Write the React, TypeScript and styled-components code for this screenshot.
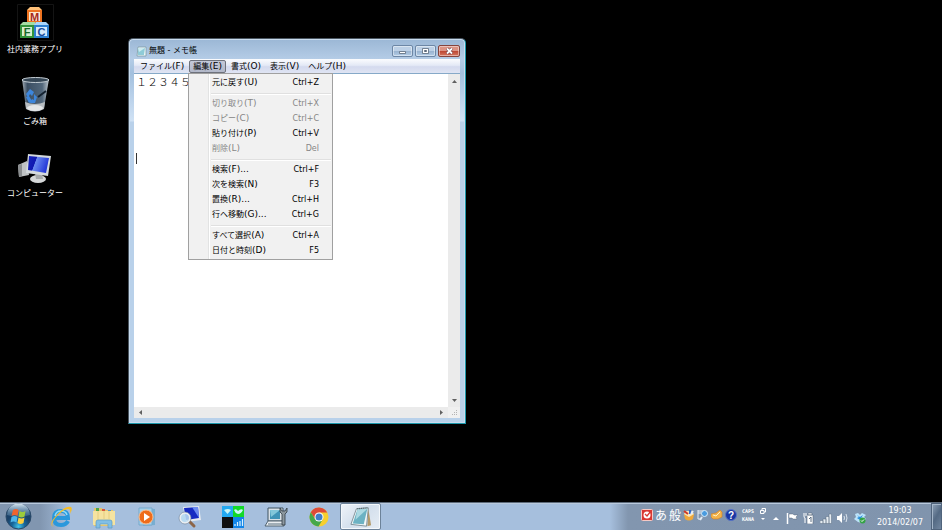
import React from 'react';
import styled, { createGlobalStyle, css } from 'styled-components';

const GlobalStyle = createGlobalStyle`
  * { box-sizing: border-box; }
  html, body, #root { height: 100%; }
  body {
    margin: 0;
    background: #000;
    color: #000;
    overflow: hidden;
    font: 8px/15px "DejaVu Sans", "Noto Sans CJK JP", sans-serif;
  }
  button, textarea { font: inherit; color: inherit; margin: 0; padding: 0; border: 0; background: none; }
  svg { display: block; }
`;

const Screen = styled.div`
  display: flex;
  flex-direction: column;
  min-height: 100vh;
`;

const Desktop = styled.main`
  position: relative;
  flex: 1;
`;

const IconColumn = styled.nav`
  display: flex;
  flex-direction: column;
  gap: 15px;
  width: 70px;
  padding-top: 4px;
`;

const Shortcut = styled.button`
  display: flex;
  flex-direction: column;
  align-items: center;
  height: 57px;
  color: #fff;
  white-space: nowrap;
  line-height: 12px;
  gap: 3px;
`;

const Window = styled.section`
  position: absolute;
  left: 128px;
  top: 38px;
  display: flex;
  flex-direction: column;
  width: 338px;
  height: 386px;
  padding: 1px 5px 5px;
  border: 1px solid #4a5661;
  border-right-color: #1c98ac;
  border-bottom-color: #1c98ac;
  border-radius: 5px 5px 0 0;
  background: linear-gradient(#9bb7d5, #b4cce6 20px, #a3c0de 34px, #d0e2f5 82px, #b9d1ea 83px);
  box-shadow: inset 0 0 0 1px #c9dcef;
`;

const TitleBar = styled.header`
  display: flex;
  align-items: center;
  gap: 2px;
  height: 19px;
  padding: 3px 0 0 2px;
`;

const Title = styled.h1`
  flex: 1;
  margin: 0;
  font-size: 8px;
  font-weight: 400;
  line-height: 12px;
`;

const Caption = styled.div`
  display: flex;
  gap: 2px;
`;

const CaptionButton = styled.button<{ $close?: boolean }>`
  display: grid;
  place-items: center;
  width: 21px;
  height: 12px;
  border: 1px solid #6d87a6;
  border-radius: 2px;
  box-shadow: inset 0 0 0 1px #ffffff70;
  background: linear-gradient(#bcd0e6 50%, #98b2cf 50%, #b2cce6);
  ${p => p.$close && css`
    width: 22px;
    border-color: #85443d;
    background: linear-gradient(#dc9384 50%, #bd4430 50%, #d47860);
  `}
`;

const MenuBar = styled.nav`
  display: flex;
  align-items: center;
  gap: 1px;
  height: 14px;
  padding-left: 2px;
  background: linear-gradient(#fbfcfe, #e4e9f6 45%, #d4daee 55%, #dfe4f3);
`;

const MenuName = styled.button<{ $open?: boolean }>`
  height: 13px;
  padding: 0 3px;
  border: 1px solid transparent;
  border-radius: 2px;
  line-height: 10px;
  white-space: nowrap;
  ${p => p.$open && css`
    border-color: #6e727c;
    background: linear-gradient(#c4c9d8, #b2b8c9);
  `}
`;

const Latin = styled.span`
  font-size: 9px;
`;

const Editor = styled.div`
  display: grid;
  grid-template: 1fr 11px / 1fr 12px;
  flex: 1;
  border-top: 1px solid #86a9c8;
  background: #f0f0f0;
`;

const TextBox = styled.textarea`
  resize: none;
  outline: none;
  overflow: hidden;
  padding: 2px;
  background: #fff;
  font: 11px/11px "Noto Sans CJK JP", sans-serif;
  font-weight: 300;
`;

const ScrollBar = styled.div<{ $vertical?: boolean }>`
  display: flex;
  flex-direction: ${p => (p.$vertical ? 'column' : 'row')};
  align-items: center;
  justify-content: space-between;
  padding: ${p => (p.$vertical ? '5px 0 4px' : '0 4px')};
  background: #ebebeb;
`;

const Caret = styled.i`
  position: absolute;
  left: 7px;
  top: 114px;
  width: 1px;
  height: 11px;
  background: #333;
`;

const Menu = styled.ul`
  position: absolute;
  left: 59px;
  top: 34px;
  width: 145px;
  margin: 0;
  padding: 1px;
  list-style: none;
  border: 1px solid #a0a0a0;
  background: linear-gradient(90deg, #f1f1f1 19px, #e2e3e3 19px, #e2e3e3 20px, #fff 20px, #fff 21px, #f1f1f1 21px);
`;

const MenuRow = styled.li<{ $divided?: boolean }>`
  ${p => p.$divided && css`
    margin-top: 3px;
    padding-top: 3px;
    background: linear-gradient(#e0e0e0 1px, #fff 1px, #fff 2px, transparent 2px) 21px 0 no-repeat;
  `}
`;

const MenuItem = styled.button`
  display: flex;
  justify-content: space-between;
  width: 100%;
  height: 15px;
  padding: 0 12px 0 22px;
  line-height: 15px;
  white-space: nowrap;
  &:disabled { color: #868686; }
`;

const Taskbar = styled.footer`
  display: flex;
  align-items: stretch;
  height: 28px;
  border-top: 1px solid #5c6a7a;
  box-shadow: inset 0 1px 0 #b9c9dc;
  background: linear-gradient(90deg, #8196b0, #8196b0 40px, #a6bfdd 70px, #a6bfdd calc(100% - 332px), #8296af calc(100% - 314px), #8094ad);
`;

const TaskButton = styled.button<{ $active?: boolean }>`
  display: grid;
  place-items: center;
  width: 43px;
  ${p => p.$active && css`
    width: 41px;
    border: 1px solid #6c8299;
    border-radius: 2px;
    box-shadow: inset 0 0 0 1px #f4f8fc;
    background: linear-gradient(135deg, #f0f4f9, #d3dfec 50%, #e6edf5);
  `}
`;

const StartButton = styled(TaskButton)`
  width: 39px;
  padding-right: 2px;
`;

const Spacer = styled.div`
  flex: 1;
`;

const Tray = styled.div`
  display: flex;
  align-items: center;
`;

const ImeBar = styled(Tray)`
  gap: 2px;
  padding-bottom: 3px;
  color: #fff;
  font: 12px/14px "Noto Sans CJK JP", sans-serif;
`;

const KeyLocks = styled.div`
  display: grid;
  grid-template-columns: 16px 8px;
  gap: 0 2px;
  align-items: center;
  padding-left: 3px;
  font: bold 5px/8px "DejaVu Sans Mono", monospace;
`;

const TrayToggle = styled.button`
  margin-right: 2px;
`;

const TrayIcons = styled(Tray)`
  gap: 5px;
  padding: 2px 0 0 5px;
`;

const Clock = styled.time`
  width: 56px;
  margin-left: 6px;
  padding-top: 2px;
  color: #fff;
  text-align: center;
  line-height: 12px;
`;

const ShowDesktop = styled.button`
  width: 11px;
  margin-left: 3px;
  border: 1px solid #50647c;
  box-shadow: inset 1px 1px 0 #a5b6c9;
  background: linear-gradient(120deg, #8fa2b8, #546a84 50%, #71869f);
`;

const Blocks = () => (
  <svg width="37" height="37" viewBox="0 0 37 37" aria-hidden="true">
    <path d="M.5.5h36v36H.5z" fill="none" stroke="#141414" />
    <path d="M10 6l3-3h9l3 3v12H10z" fill="#ffc078" />
    <path d="M10 6h15v13H10z" fill="#ee7320" />
    <path d="M12 8h11v9H12z" fill="#fde6cc" />
    <path d="M3 21l3-3h12v3z" fill="#a5dda5" />
    <path d="M3 21h14v13H3z" fill="#32933b" />
    <path d="M5 23h10v9H5z" fill="#d5efcf" />
    <path d="M17 21l2-3h10l3 3z" fill="#a8d5fb" />
    <path d="M17 21h15v13H17z" fill="#2d7fd0" />
    <path d="M19 23h11v9H19z" fill="#d5eafc" />
    <g fontFamily="Liberation Sans" fontWeight="700" fontSize="11" textAnchor="middle">
      <text x="17.500" y="16.500" fill="#a52a1c">M</text>
      <text x="10" y="31.500" fill="#17692a">F</text>
      <text x="24.500" y="31.500" fill="#184a9c">C</text>
    </g>
  </svg>
);

const Bin = () => (
  <svg width="37" height="37" viewBox="0 0 37 37" aria-hidden="true">
    <defs>
      <linearGradient id="bin"><stop stopColor="#a5afb7" /><stop offset=".2" stopColor="#3b4e62" /><stop offset=".75" stopColor="#52677b" /><stop offset="1" stopColor="#c1c9cf" /></linearGradient>
    </defs>
    <path d="M5 3l4 29q9 6 18 0l5-29z" fill="url(#bin)" />
    <path d="M8 26q10 4 20 0l-1 7q-9 5-18 0z" fill="#b9bec2" />
    <ellipse cx="18" cy="32" rx="8" ry="3" fill="#e5e7e8" />
    <ellipse cx="18.500" cy="4" rx="13.500" ry="2.500" fill="#354655" stroke="#c5ced5" />
    <path d="M9 18l4-5 4 3-2 4-2-2-2 4zM9 21l3-1 3 5-3 2zM17 18l3 3-2 6h-5l2-4 2 1z" fill="#3d86dc" />
    <path d="M21 21l8-6" stroke="#142230" strokeWidth="2" />
  </svg>
);

const Computer = () => (
  <svg width="37" height="37" viewBox="0 0 37 37" aria-hidden="true">
    <defs>
      <linearGradient id="scr" x2="1" y2=".3"><stop stopColor="#1826bd" /><stop offset=".4" stopColor="#1018b0" /><stop offset=".43" stopColor="#6a8af0" /><stop offset="1" stopColor="#2438d8" /></linearGradient>
    </defs>
    <path d="M1 17l9-4 2 14-10 2z" fill="#bfc2c4" />
    <path d="M1 17l4-1v12l-3 1z" fill="#8a8d8f" />
    <ellipse cx="21" cy="31" rx="8" ry="4" fill="#d5d7d8" />
    <path d="M18 25h7l1 6h-7z" fill="#a7aaac" />
    <path d="M11 6l23 2-3 20-22-3z" fill="#d5dadd" />
    <path d="M12 8l20 2-3 15-18-3z" fill="url(#scr)" />
  </svg>
);

const NotePage = ({ size }: { size: number }) => (
  <svg width={size} height={size} viewBox="0 0 24 24" aria-hidden="true">
    <path d="M20 3l3 18-4 1z" fill="#b39a6a" />
    <path d="M7 3l13-1-2 20-17-2z" fill="#f4f7f8" stroke="#60757d" strokeWidth=".8" />
    <path d="M8 4l11-1-4 17-12-1z" fill="#6cb2c3" />
    <path d="M8 4l11-1-13 12z" fill="#acd9e2" />
    <path d="M8 3l11-1" stroke="#50636a" strokeWidth="1.500" strokeDasharray="1 1" />
  </svg>
);

const TitlePage = () => (
  <svg width="11" height="11" viewBox="0 0 11 11" aria-hidden="true">
    <path d="M2 1h8v9H1z" fill="#f2fafb" stroke="#7c9aa5" strokeWidth=".8" />
    <path d="M2 2h7l-1 7H2z" fill="#8fcbd7" /><path d="M2 2h7L3 6z" fill="#cdebf0" />
  </svg>
);

const Start = () => (
  <svg width="27" height="27" viewBox="0 0 27 27" aria-hidden="true">
    <defs>
      <radialGradient id="orb" cy=".9"><stop stopColor="#42c4e8" /><stop offset=".5" stopColor="#17679c" /><stop offset="1" stopColor="#1b4269" /></radialGradient>
      <linearGradient id="shine" x2="0" y2="1"><stop stopColor="#d7e6f1" /><stop offset="1" stopColor="#6592b5" stopOpacity=".3" /></linearGradient>
    </defs>
    <circle cx="13.500" cy="13.500" r="12.500" fill="url(#orb)" stroke="#2b4a68" />
    <path d="M2 12a11.500 11.500 0 0 1 23 0q-12 4-23 0z" fill="url(#shine)" />
    <path d="M8 7q3-2 5.500 0l-1 6q-3-2-6 0z" fill="#f0642e" />
    <path d="M14.500 8q3 2 6 0l-1 5.500q-3 2-6 0z" fill="#9ccb3b" />
    <path d="M6.500 14q3-2 6 0l-1 5.500q-3-2-6 0z" fill="#4db5ea" />
    <path d="M13.500 14.500q3 2 6 0l-1 5.500q-3 2-6 0z" fill="#fccf3c" />
  </svg>
);

const Explorer = () => (
  <svg width="24" height="24" viewBox="0 0 24 24" aria-hidden="true">
    <path d="M6 13h13q0-7-7-7t-7 7q0 7 7 7 5 0 7-4" fill="none" stroke="#2a98dc" strokeWidth="4" />
    <path d="M6 11q1-5 6-5t6 4" fill="none" stroke="#8fdcfa" strokeWidth="1.500" />
    <path d="M4 22q-4-3 2-10Q16 0 22 2q2 2-1 7 1-5-2-5-4 0-10 6-8 8-5 12z" fill="#f6bd25" />
  </svg>
);

const Folder = () => (
  <svg width="24" height="24" viewBox="0 0 24 24" aria-hidden="true">
    <path d="M2 3h8l1 2h10v16H2z" fill="#e4c46b" />
    <path d="M4 3h3v3H4z" fill="#48a64c" /><path d="M10 4h3v3h-3z" fill="#d7593e" /><path d="M16 5h3v2h-3z" fill="#4c93cd" />
    <path d="M1 6h22v14H1z" fill="#f5e3a0" />
    <path d="M6 6v12M12 6v8M17 6v8" stroke="#e6cd7e" />
    <path d="M4 23v-6q0-2 2-2h12q2 0 2 2v6h-4v-4H8v4z" fill="#81bfe5" stroke="#5b9bc5" strokeWidth=".7" />
  </svg>
);

const Player = () => (
  <svg width="20" height="20" viewBox="0 0 20 20" aria-hidden="true">
    <path d="M6 1l12 1v16l-12 1z" fill="#78aed1" />
    <path d="M2 1h13v17H2z" fill="#a6d2ec" stroke="#76a9cb" />
    <circle cx="9" cy="10" r="7" fill="#ee6c1b" stroke="#fbc092" />
    <path d="M7 6l6 4-6 4z" fill="#fff" />
  </svg>
);

const Finder = () => (
  <svg width="24" height="24" viewBox="0 0 24 24" aria-hidden="true">
    <path d="M5 2l16-1 2 14-15 2z" fill="#e4e9ee" />
    <path d="M6 3l14-1 1 11-13 2z" fill="#152ac2" /><path d="M14 2l6 0 1 11z" fill="#6b8bf0" />
    <path d="M11 16l5 5" stroke="#8c6548" strokeWidth="3" strokeLinecap="round" />
    <circle cx="7" cy="13" r="5" fill="#bcdff3dd" stroke="#e9eef2" strokeWidth="2" />
    <circle cx="7" cy="13" r="6" fill="none" stroke="#708399" strokeWidth=".6" />
  </svg>
);

const Wireless = () => (
  <svg width="22" height="22" viewBox="0 0 22 22" aria-hidden="true">
    <path d="M0 0h11v11H0z" fill="#24a9f1" /><path d="M11 0h11v11H11z" fill="#13d928" />
    <path d="M0 11h11v11H0z" fill="#111" /><path d="M11 11h11v11H11z" fill="#1285e8" />
    <path d="M2 4q4-2 7 0l-3.500 4zM12 4q2-2 4 1 3-3 5-1-2 4-5 4-3-1-4-4z" fill="#cbf5f5" />
    <path d="M13 20v-2M15.500 20v-4M18 20v-5M20.500 20v-7" stroke="#d7f0ff" strokeWidth="1.200" />
  </svg>
);

const Laptop = () => (
  <svg width="24" height="22" viewBox="0 0 24 22" aria-hidden="true">
    <path d="M4 2h15v13H4z" fill="#d9e1e7" stroke="#3f5361" />
    <path d="M6 4h10v9H6z" fill="#3f94b7" /><path d="M6 4h10L7 11z" fill="#82c7da" />
    <path d="M4 15h15l1 5H1z" fill="#e9edf0" stroke="#526471" />
    <path d="M4 18h14" stroke="#8899a5" strokeWidth="1.500" />
    <path d="M16 2v4l2 2v11h3V8l2-2V2l-2 3h-3z" fill="#8c979e" stroke="#303b43" strokeWidth=".8" />
  </svg>
);

const Chrome = () => (
  <svg width="20" height="20" viewBox="0 0 20 20" aria-hidden="true">
    <circle cx="10" cy="10" r="9.500" fill="#f6cf2f" />
    <path d="M1.800 5.200A9.500 9.500 0 0 1 18.300 5.500H10L6 12z" fill="#dd4a38" />
    <path d="M1.800 5.200A9.500 9.500 0 0 0 9.500 19.500L14 12H6z" fill="#45a84b" />
    <circle cx="10" cy="10" r="4.500" fill="#fff" /><circle cx="10" cy="10" r="3.500" fill="#3f7ec8" />
  </svg>
);

const Arrow = ({ turn }: { turn: number }) => (
  <svg width="5" height="5" viewBox="0 0 5 5" aria-hidden="true">
    <path d="M0 4l2.500-3L5 4z" fill="#606060" transform={`rotate(${turn} 2.5 2.5)`} />
  </svg>
);

const Grip = () => (
  <svg width="12" height="11" viewBox="0 0 12 11" aria-hidden="true">
    <path d="M8 3h1v1H8zM6 5h1v1H6zM8 5h1v1H8zM4 7h1v1H4zM6 7h1v1H6zM8 7h1v1H8z" fill="#b4b4b4" />
  </svg>
);

const ImeLogo = () => (
  <svg width="12" height="12" viewBox="0 0 12 12" aria-hidden="true">
    <rect x=".5" y=".5" width="11" height="11" rx="1" fill="#d93832" stroke="#f5c9c5" />
    <circle cx="6" cy="6" r="3.500" fill="#fff" /><path d="M4 5l2 2 4-5" fill="none" stroke="#d93832" strokeWidth="1.300" />
  </svg>
);

const Palette = () => (
  <svg width="12" height="12" viewBox="0 0 12 12" aria-hidden="true">
    <path d="M1 5h10l-1 5q-4 3-8 0z" fill="#f0a83a" /><path d="M1 5l5 3 5-3-3-3H3z" fill="#f6e7c0" />
    <path d="M1 2l4 3" stroke="#d33a28" strokeWidth="2" /><path d="M7 1v4" stroke="#3169c8" strokeWidth="2" /><path d="M10 2L8 5" stroke="#e8ecf4" strokeWidth="2" />
  </svg>
);

const Lens = () => (
  <svg width="12" height="12" viewBox="0 0 12 12" aria-hidden="true">
    <path d="M1 2h6M1 4h3M1 1v9M1 10h2" stroke="#e6edf5" /><path d="M5 8l-2 3" stroke="#e6edf5" strokeWidth="2" />
    <circle cx="7.500" cy="4.500" r="3" fill="#4a9bdf" stroke="#d9edfb" />
  </svg>
);

const Hand = () => (
  <svg width="12" height="12" viewBox="0 0 12 12" aria-hidden="true">
    <path d="M0 5l5-1 4-3 2 2v5l-4 2H2L0 8z" fill="#f3b34b" stroke="#d17c20" strokeWidth=".6" /><path d="M2 6l3 1 4-4" stroke="#fff0c4" fill="none" />
  </svg>
);

const Help = () => (
  <svg width="12" height="12" viewBox="0 0 12 12" aria-hidden="true">
    <circle cx="6" cy="6" r="5.500" fill="#1a36a4" stroke="#5672c5" />
    <text x="6" y="9.500" fill="#fff" fontFamily="Liberation Sans" fontSize="10" fontWeight="700" textAnchor="middle">?</text>
  </svg>
);

const Restore = () => (
  <svg width="6" height="6" viewBox="0 0 6 6" aria-hidden="true"><path d="M2 2V.5h3.500V4H4M.5 2.500H4v3H.5z" stroke="#fff" fill="none" /></svg>
);

const SmallArrow = ({ down }: { down?: boolean }) => (
  <svg width="6" height="4" viewBox="0 0 6 4" aria-hidden="true"><path d={down ? 'M1 1h4L3 3z' : 'M0 4l3-3 3 3z'} fill="#fff" /></svg>
);

const Flag = () => (
  <svg width="12" height="12" viewBox="0 0 12 12" aria-hidden="true"><path d="M1.500 1v11" stroke="#fff" strokeWidth="1.500" /><path d="M3 2h4l1 1h4L10 5l1 2H7L6 6H3z" fill="#fff" stroke="#4b5e72" strokeWidth=".4" /></svg>
);

const Power = () => (
  <svg width="12" height="12" viewBox="0 0 12 12" aria-hidden="true"><path d="M4 3h6v9H4zM5 1h4v2H5z" fill="#fff" stroke="#5b6d80" strokeWidth=".6" /><path d="M1 1v3q0 2 1 2v5M3 1v3" stroke="#fff" fill="none" /><path d="M6 7l2-2v5" stroke="#5b6d80" fill="none" /></svg>
);

const Signal = () => (
  <svg width="12" height="12" viewBox="0 0 12 12" aria-hidden="true"><path d="M0 8.500h3v3H0zM3 7h3v4.500H3zM6 4.500h3v7H6zM9 2h2.500v9.500H9z" fill="#e5ebf1" stroke="#596c80" strokeWidth=".5" /></svg>
);

const Sound = () => (
  <svg width="12" height="12" viewBox="0 0 12 12" aria-hidden="true"><path d="M0 4h2l3-3v10L2 8H0z" fill="#fff" /><path d="M7 4q1 2 0 4M9 2q2 4 0 8" stroke="#dbe4ed" fill="none" /></svg>
);

const Dropbox = () => (
  <svg width="12" height="12" viewBox="0 0 12 12" aria-hidden="true"><path d="M1 2l3-1 2 2 2-2 4 2-2 2 2 2-4 4-4-1-4-3 2-2z" fill="#bce3fa" /><path d="M3 3l3 2 3-2-3 5-3-2 2-1z" fill="#278ede" /><circle cx="8.500" cy="8.500" r="3" fill="#33a345" /><path d="M7 8.500l1 1 2-2" stroke="#fff" fill="none" /></svg>
);

const bar = [['ファイル', '(F)'], ['編集', '(E)'], ['書式', '(O)'], ['表示', '(V)'], ['ヘルプ', '(H)']];

type Entry = { name: string; key: string; shortcut: string; disabled?: boolean; divided?: boolean };

const entries: Entry[] = [
  { name: '元に戻す', key: '(U)', shortcut: 'Ctrl+Z' },
  { name: '切り取り', key: '(T)', shortcut: 'Ctrl+X', disabled: true, divided: true },
  { name: 'コピー', key: '(C)', shortcut: 'Ctrl+C', disabled: true },
  { name: '貼り付け', key: '(P)', shortcut: 'Ctrl+V' },
  { name: '削除', key: '(L)', shortcut: 'Del', disabled: true },
  { name: '検索', key: '(F)...', shortcut: 'Ctrl+F', divided: true },
  { name: '次を検索', key: '(N)', shortcut: 'F3' },
  { name: '置換', key: '(R)...', shortcut: 'Ctrl+H' },
  { name: '行へ移動', key: '(G)...', shortcut: 'Ctrl+G' },
  { name: 'すべて選択', key: '(A)', shortcut: 'Ctrl+A', divided: true },
  { name: '日付と時刻', key: '(D)', shortcut: 'F5' },
];

const shortcuts = [
  { name: '社内業務アプリ', Icon: Blocks },
  { name: 'ごみ箱', Icon: Bin },
  { name: 'コンピューター', Icon: Computer },
];

const pinned = [
  { name: 'Internet Explorer', Icon: Explorer },
  { name: 'エクスプローラー', Icon: Folder },
  { name: 'Media Player', Icon: Player },
  { name: '検索', Icon: Finder },
  { name: 'ワイヤレス', Icon: Wireless },
  { name: 'PC設定', Icon: Laptop },
  { name: 'Chrome', Icon: Chrome },
];

export default function App() {
  return (
    <Screen lang="ja">
      <GlobalStyle />
      <Desktop>
        <IconColumn>
          {shortcuts.map(({ name, Icon }) => (
            <Shortcut key={name}><Icon />{name}</Shortcut>
          ))}
        </IconColumn>
        <Window>
          <TitleBar>
            <TitlePage />
            <Title>無題 - メモ帳</Title>
            <Caption>
              <CaptionButton aria-label="最小化">
                <svg width="9" height="8" viewBox="0 0 9 8"><path d="M1.500 4.500h6v2h-6z" fill="#fff" stroke="#59687a" strokeWidth=".8" /></svg>
              </CaptionButton>
              <CaptionButton aria-label="最大化">
                <svg width="9" height="8" viewBox="0 0 9 8"><path d="M1.500 1.500h6v5h-6z" fill="#fff" stroke="#59687a" strokeWidth=".8" /><path d="M3.500 3.500h2v1h-2z" stroke="#59687a" fill="none" /></svg>
              </CaptionButton>
              <CaptionButton $close aria-label="閉じる">
                <svg width="9" height="8" viewBox="0 0 9 8"><path d="M2 1.500l5 5M7 1.500l-5 5" stroke="#5b3440" strokeWidth="3" /><path d="M2 1.500l5 5M7 1.500l-5 5" stroke="#fff" strokeWidth="1.800" /></svg>
              </CaptionButton>
            </Caption>
          </TitleBar>
          <MenuBar>
            {bar.map(([name, key]) => (
              <MenuName key={name} $open={name === '編集'}>{name}<Latin>{key}</Latin></MenuName>
            ))}
          </MenuBar>
          <Editor>
            <TextBox aria-label="本文" spellCheck={false} defaultValue="１２３４５" />
            <ScrollBar $vertical><Arrow turn={0} /><Arrow turn={180} /></ScrollBar>
            <ScrollBar><Arrow turn={270} /><Arrow turn={90} /></ScrollBar>
            <Grip />
          </Editor>
          <Caret />
          <Menu>
            {entries.map(e => (
              <MenuRow key={e.name} $divided={e.divided}>
                <MenuItem disabled={e.disabled}>
                  <span>{e.name}<Latin>{e.key}</Latin></span>
                  <span>{e.shortcut}</span>
                </MenuItem>
              </MenuRow>
            ))}
          </Menu>
        </Window>
      </Desktop>
      <Taskbar>
        <StartButton aria-label="スタート"><Start /></StartButton>
        {pinned.map(({ name, Icon }) => (
          <TaskButton key={name} aria-label={name}><Icon /></TaskButton>
        ))}
        <TaskButton $active aria-label="メモ帳"><NotePage size={22} /></TaskButton>
        <Spacer />
        <ImeBar>
          <ImeLogo /><span>あ</span><span>般</span><Palette /><Lens /><Hand /><Help />
          <KeyLocks><span>CAPS</span><Restore /><span>KANA</span><SmallArrow down /></KeyLocks>
        </ImeBar>
        <TrayIcons>
          <TrayToggle aria-label="隠れているインジケーター"><SmallArrow /></TrayToggle>
          <Flag /><Power /><Signal /><Sound /><Dropbox />
        </TrayIcons>
        <Clock>19:03<br />2014/02/07</Clock>
        <ShowDesktop aria-label="デスクトップの表示" />
      </Taskbar>
    </Screen>
  );
}
